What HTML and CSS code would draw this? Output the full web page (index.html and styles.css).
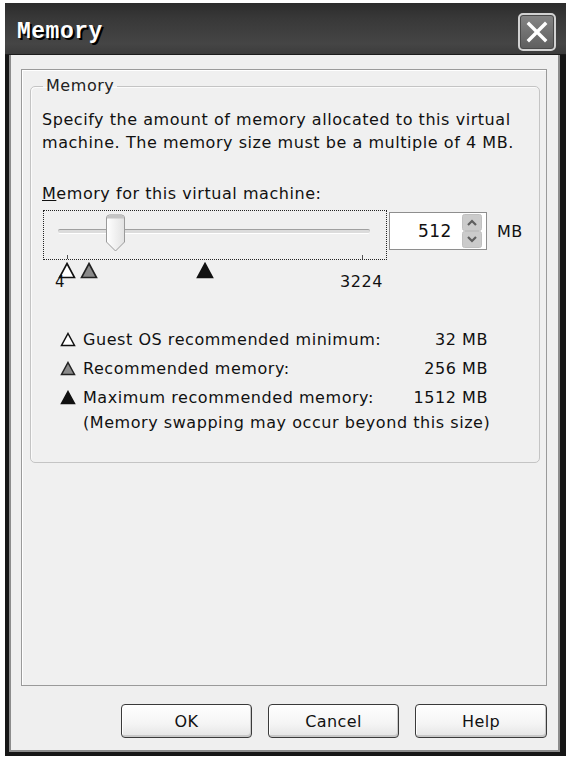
FILE: index.html
```html
<!DOCTYPE html>
<html>
<head>
<meta charset="utf-8">
<title>Memory</title>
<link rel="stylesheet" href="styles.css">
</head>
<body>
<div class="window">
  <div class="titlebar">
    <span class="title">Memory</span>
    <button class="close" aria-label="Close">
      <svg width="24" height="24" viewBox="0 0 24 24"><path d="M4 4 L20 20 M20 4 L4 20" stroke="#fff" stroke-width="3.4" stroke-linecap="square"/></svg>
    </button>
  </div>
  <div class="body">
    <div class="panel">
      <fieldset class="group">
        <legend>Memory</legend>
        <p class="desc">Specify the amount of memory allocated to this virtual machine. The memory size must be a multiple of 4 MB.</p>
        <div class="label"><u>M</u>emory for this virtual machine:</div>
        <div class="slider-row">
          <div class="slider">
            <div class="track"></div>
            <span class="tick tick-min"></span>
            <span class="tick tick-max"></span>
            <svg class="thumb" width="21" height="38" viewBox="0 0 21 38">
              <defs>
                <linearGradient id="tg" x1="0" y1="0" x2="1" y2="0">
                  <stop offset="0" stop-color="#ffffff"/>
                  <stop offset="1" stop-color="#e2e2e2"/>
                </linearGradient>
              </defs>
              <path d="M1.5 4 Q1.5 1 4.5 1 L16.5 1 Q19.5 1 19.5 4 L19.5 28 L10.5 37 L1.5 28 Z" fill="url(#tg)" stroke="#9a9a9a" stroke-width="1"/>
              <rect x="2" y="1.5" width="17" height="3" fill="#c4c4c4"/>
            </svg>
          </div>
          <div class="spin">
            <span class="spin-val">512</span>
            <div class="spin-btns">
              <svg width="20" height="34" viewBox="0 0 20 34">
                <rect x="0.5" y="0.5" width="19" height="16" rx="2" fill="#cbcbcb" stroke="#c0c0c0"/>
                <rect x="0.5" y="17.5" width="19" height="16" rx="2" fill="#cbcbcb" stroke="#c0c0c0"/>
                <path d="M6 11 L10 7 L14 11" fill="none" stroke="#5e5e5e" stroke-width="2.2"/>
                <path d="M6 23 L10 27 L14 23" fill="none" stroke="#5e5e5e" stroke-width="2.2"/>
              </svg>
            </div>
          </div>
          <span class="unit">MB</span>
        </div>
        <div class="marks">
          <svg class="mark" style="left:16px" width="18" height="17" viewBox="0 0 18 17"><path d="M9 1.5 L16.5 15.5 L1.5 15.5 Z" fill="#fff" stroke="#111" stroke-width="1.6"/></svg>
          <svg class="mark" style="left:38px" width="18" height="17" viewBox="0 0 18 17"><path d="M9 1.5 L16.5 15.5 L1.5 15.5 Z" fill="#8a8a8a" stroke="#222" stroke-width="1.6"/></svg>
          <svg class="mark" style="left:154px" width="18" height="17" viewBox="0 0 18 17"><path d="M9 1.5 L16.5 15.5 L1.5 15.5 Z" fill="#111" stroke="#111" stroke-width="1.6"/></svg>
          <span class="mark-label min-label">4</span>
          <span class="mark-label max-label">3224</span>
        </div>
        <div class="legend-list">
          <svg class="ico" width="16" height="15" viewBox="0 0 16 15"><path d="M8 1.5 L14.5 13.5 L1.5 13.5 Z" fill="#fff" stroke="#111" stroke-width="1.5"/></svg>
          <span class="lbl">Guest OS recommended minimum:</span>
          <span class="val">32 MB</span>
          <svg class="ico" width="16" height="15" viewBox="0 0 16 15"><path d="M8 1.5 L14.5 13.5 L1.5 13.5 Z" fill="#8a8a8a" stroke="#222" stroke-width="1.5"/></svg>
          <span class="lbl">Recommended memory:</span>
          <span class="val">256 MB</span>
          <svg class="ico" width="16" height="15" viewBox="0 0 16 15"><path d="M8 1.5 L14.5 13.5 L1.5 13.5 Z" fill="#111" stroke="#111" stroke-width="1.5"/></svg>
          <span class="lbl">Maximum recommended memory:</span>
          <span class="val">1512 MB</span>
          <span class="note">(Memory swapping may occur beyond this size)</span>
        </div>
      </fieldset>
    </div>
    <div class="buttons">
      <button class="btn btn-ok">OK</button>
      <button class="btn btn-cancel">Cancel</button>
      <button class="btn btn-help">Help</button>
    </div>
  </div>
</div>
</body>
</html>
```

FILE: styles.css
```css
html, body {
  margin: 0;
  padding: 0;
  background: #ffffff;
}

body {
  font-family: "DejaVu Sans", sans-serif;
  font-size: 16px;
  letter-spacing: 0.55px;
  color: #111;
}

.window {
  box-sizing: border-box;
  width: 561px;
  height: 753px;
  margin: 3px 0 0 5px;
  display: flex;
  flex-direction: column;
  background: #efefef;
  border-left: 4px solid #161616;
  border-right: 6px solid #161616;
  border-bottom: 4px solid #161616;
  box-shadow: inset 2px 0 0 #8c8c8c, inset -2px 0 0 #8c8c8c, inset 0 -2px 0 #8c8c8c;
}

.titlebar {
  flex: none;
  display: flex;
  align-items: center;
  justify-content: space-between;
  margin: 0 -6px 0 -4px;
  padding: 6px 10px 0 12px;
  box-sizing: border-box;
  height: 52px;
  background: linear-gradient(#2c2c2c 0%, #383838 30%, #454545 80%, #3c3c3c 100%);
  border-bottom: 1px solid #1c1c1c;
}

.title {
  font-family: "Liberation Mono", "DejaVu Sans Mono", monospace;
  font-weight: bold;
  font-size: 23px;
  letter-spacing: 0.5px;
  color: #ffffff;
  text-shadow: 2px 2px 0 #000;
}

.close {
  box-sizing: border-box;
  width: 38px;
  height: 38px;
  padding: 0;
  display: flex;
  align-items: center;
  justify-content: center;
  border: 2px solid #d2d2d2;
  border-radius: 5px;
  background: linear-gradient(#858585, #5e5e5e);
  box-shadow: inset 0 0 0 1px #4a4a4a;
}

.body {
  flex: 1;
  display: flex;
  flex-direction: column;
  padding: 14px 13px 14px 12px;
}

.panel {
  flex: 1;
  box-sizing: border-box;
  border: 1px solid #9a9a9a;
  box-shadow: inset 1px 1px 0 #ffffff;
  background: #f0f0f0;
  padding: 7px 5px 0 8px;
}

.group {
  box-sizing: border-box;
  width: 510px;
  height: 386px;
  margin: 0;
  padding: 13px 6px 0 11px;
  border: 1px solid #c4c4c4;
  border-radius: 5px;
  box-shadow: inset 1px 1px 0 #fbfbfb;
}

.group legend {
  padding: 0 3px;
  margin-left: 1px;
  line-height: 18px;
  color: #222;
}

.desc {
  margin: 0;
  line-height: 23px;
}

.label {
  margin-top: 28px;
  line-height: 23px;
}

.slider-row {
  display: flex;
  align-items: flex-start;
  margin-top: 5px;
}

.slider {
  position: relative;
  box-sizing: border-box;
  flex: none;
  width: 344px;
  height: 50px;
  margin-left: 1px;
  border: 1px dotted #222;
}

.track {
  position: absolute;
  left: 14px;
  right: 16px;
  top: 18px;
  height: 3px;
  border-radius: 2px;
  background: #dcdcdc;
  border-top: 1px solid #a0a0a0;
  border-bottom: 1px solid #ffffff;
}

.tick {
  position: absolute;
  bottom: 0;
  width: 1px;
  height: 4px;
  background: #555;
}

.tick-min { left: 23px; }
.tick-max { left: 318px; }

.thumb {
  position: absolute;
  left: 61px;
  top: 3px;
}

.spin {
  box-sizing: border-box;
  flex: none;
  width: 98px;
  height: 38px;
  margin-top: 2px;
  margin-left: 2px;
  display: flex;
  align-items: center;
  justify-content: flex-end;
  border: 1px solid #8e8e8e;
  background: #ffffff;
  padding-right: 4px;
}

.spin-val {
  font-size: 17px;
  margin-right: 10px;
}

.spin-btns {
  display: flex;
}

.unit {
  margin-left: 10px;
  margin-top: 12px;
}

.marks {
  position: relative;
  height: 32px;
}

.mark {
  position: absolute;
  top: 2px;
}

.mark-label {
  position: absolute;
  line-height: 18px;
}

.min-label {
  left: 13px;
  top: 13px;
  font-size: 15px;
}

.max-label {
  left: 298px;
  top: 13px;
}

.legend-list {
  display: grid;
  grid-template-columns: 23px 1fr auto;
  width: 428px;
  margin: 33px 0 0 18px;
  line-height: 29px;
  align-items: center;
}

.ico {
  display: block;
}

.val {
  text-align: right;
}

.note {
  grid-column: 2 / 4;
  white-space: nowrap;
  line-height: 21px;
}

.buttons {
  flex: none;
  display: flex;
  justify-content: flex-end;
  gap: 16px;
  margin-top: 18px;
}

.btn {
  box-sizing: border-box;
  width: 131px;
  height: 34px;
  font-family: "DejaVu Sans", sans-serif;
  font-size: 16px;
  letter-spacing: 0.4px;
  color: #111;
  border: 1px solid #3a3a3a;
  border-radius: 4px;
  background: linear-gradient(#ffffff 0%, #f4f4f4 60%, #e4e4e4 100%);
  box-shadow: inset -1px -2px 0 #c8c8c8, inset 1px 1px 0 #ffffff;
}

.btn-help {
  width: 132px;
}
```
